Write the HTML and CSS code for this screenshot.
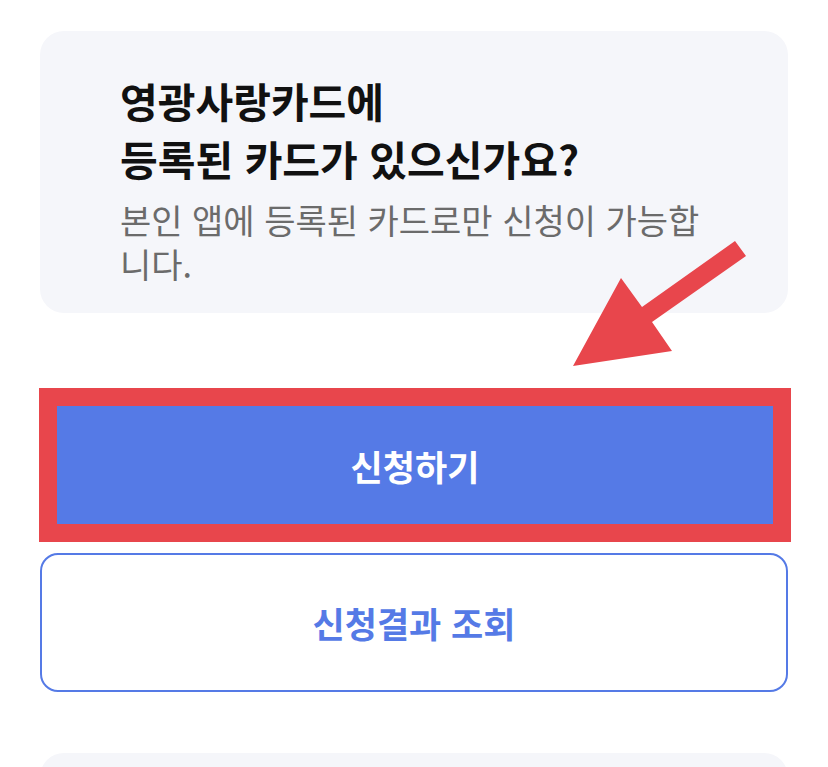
FILE: index.html
```html
<!DOCTYPE html>
<html lang="ko">
<head>
<meta charset="utf-8">
<link rel="stylesheet" href="styles.css">
</head>
<body>
<div class="page">
  <section class="info-card">
    <h1 class="info-title">영광사랑카드에<br>등록된 카드가 있으신가요?</h1>
    <p class="info-desc">본인 앱에 등록된 카드로만 신청이 가능합니다.</p>
  </section>
  <div class="highlight">
    <button class="btn-primary">신청하기</button>
  </div>
  <button class="btn-outline">신청결과 조회</button>
  <section class="next-card"></section>
</div>
<svg class="arrow" width="828" height="767" viewBox="0 0 828 767">
  <polygon points="573,366 621,278 642,307 735,241 746,256 652,322 672,351" fill="#e8464c"/>
</svg>
</body>
</html>
```
FILE: styles.css
```css
html, body {
  margin: 0;
  padding: 0;
  background: #ffffff;
  font-family: "Noto Sans CJK KR", "Noto Sans", sans-serif;
}
body {
  position: relative;
  width: 828px;
  height: 767px;
  overflow: hidden;
}
.page {
  padding: 31px 40px 0 40px;
  display: flex;
  flex-direction: column;
}
.info-card {
  background: #f5f6fa;
  border-radius: 24px;
  height: 282px;
  box-sizing: border-box;
  padding: 40px 80px 0 80px;
}
.info-title {
  margin: 0;
  font-size: 41px;
  line-height: 58px;
  font-weight: 700;
  color: #111111;
}
.info-desc {
  margin: 11px 0 0 0;
  font-size: 34px;
  line-height: 44px;
  font-weight: 400;
  color: #6b6b6b;
}
.highlight {
  margin: 75px -3px 0 -1px;
  border: 18px solid #e8464c;
}
.btn-primary {
  display: block;
  width: 100%;
  height: 118px;
  border: 0;
  background: #557ae6;
  color: #ffffff;
  font-family: inherit;
  font-size: 35px;
  font-weight: 700;
  padding: 0;
}
.btn-outline {
  margin-top: 11px;
  height: 139px;
  border: 2px solid #557ae6;
  border-radius: 18px;
  background: #ffffff;
  color: #557ae6;
  font-family: inherit;
  font-size: 35px;
  font-weight: 700;
  padding: 0;
}
.next-card {
  margin-top: 61px;
  height: 80px;
  background: #f5f6fa;
  border-radius: 24px;
}
.arrow {
  position: absolute;
  left: 0;
  top: 0;
  pointer-events: none;
}
```
